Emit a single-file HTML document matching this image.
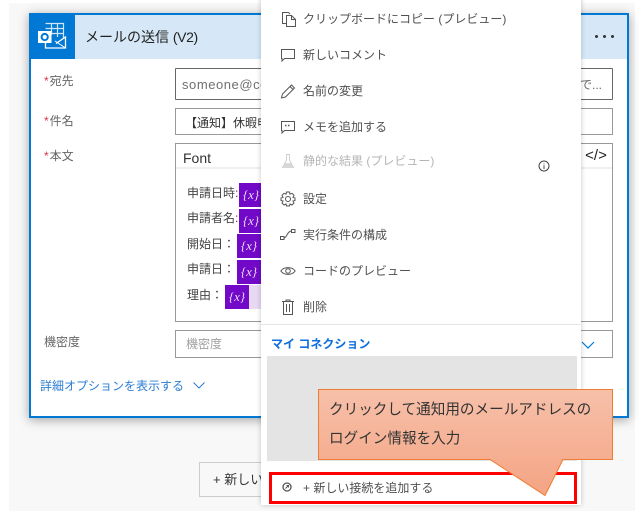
<!DOCTYPE html>
<html lang="ja">
<head>
<meta charset="utf-8">
<style>
html,body{margin:0;padding:0;background:#fff}
body{width:643px;height:521px;position:relative;overflow:hidden;font-family:"Liberation Sans","Noto Sans CJK JP",sans-serif;font-size:12px;color:#333}
.a{position:absolute;white-space:nowrap}
.t{position:absolute;white-space:nowrap;line-height:18px;height:18px}
.box{position:absolute;box-sizing:border-box;background:#fff;border:1px solid #999}
.x{position:absolute;width:24px;height:24px;background:#7209c9;color:#e6d5f5;font:italic 13px/23px "Liberation Serif",serif;text-align:center}
.star{color:#d9304a;margin-right:1px}
svg{position:absolute;overflow:visible;fill:none;stroke:#555;stroke-width:1}
.m{color:#505050}
</style>
</head>
<body>
<div class="a" style="left:9px;top:3px;width:626px;height:508px;background:#f8f8f8"></div>

<!-- card -->
<div class="a" style="left:29px;top:13px;width:600px;height:405px;box-sizing:border-box;background:#fff;border:2px solid #0078d4;box-shadow:0 2px 10px rgba(0,0,0,.35)"></div>
<div class="a" style="left:31px;top:15px;width:596px;height:44px;background:#d6e8f7"></div>
<div class="a" style="left:31px;top:15px;width:44px;height:44px;background:#0078d4"></div>
<svg style="left:38px;top:23px" width="28" height="26" viewBox="0 0 28 26">
<path d="M7.500 .5H25.500V15M13.500 .5V12M19.500 .5V14M7.500 5.500H25.500M7.500 10.500H25.500" stroke="#cfe4f6" stroke-width="1.200"/>
<path d="M7.500 19V25H27.500V14L18 20.500" stroke="#fff" stroke-width="1.300"/>
<path d="M27.500 25L17 18" stroke="#fff"/>
<rect x="0" y="8" width="13.500" height="12" fill="#fff" stroke="none"/>
<circle cx="6.700" cy="14" r="3.100" stroke="#0078d4" stroke-width="2"/>
</svg>
<div class="t" style="left:85px;top:28px;font-size:14px;line-height:18px;color:#222">メールの送信 <span style="letter-spacing:-.4px">(V2)</span></div>
<div class="a" style="left:595px;top:35px;width:3px;height:3px;border-radius:50%;background:#333;box-shadow:8px 0 0 #333,16px 0 0 #333"></div>

<div class="t" style="left:44px;top:72px;color:#666"><span class="star">*</span>宛先</div>
<div class="t" style="left:44px;top:112px;color:#666"><span class="star">*</span>件名</div>
<div class="t" style="left:44px;top:147px;color:#666"><span class="star">*</span>本文</div>
<div class="t" style="left:44px;top:333px;color:#666">機密度</div>

<div class="box" style="left:175px;top:68px;width:438px;height:32px;border-color:#666;border-radius:1px"></div>
<div class="t" style="left:182px;top:76px;font-size:13px;letter-spacing:.55px;color:#707070">someone@co</div>
<div class="t" style="left:580px;top:76px;font-size:12px;color:#666">で...</div>

<div class="box" style="left:175px;top:108px;width:438px;height:27px"></div>
<div class="t" style="left:185px;top:114px;color:#333">【通知】休暇申請</div>

<div class="box" style="left:175px;top:143px;width:438px;height:179px"></div>
<div class="a" style="left:176px;top:167px;width:436px;height:2px;background:#f0f0f0"></div>
<div class="t" style="left:183px;top:149px;font-size:14px;color:#333">Font</div>
<div class="a" style="left:581px;top:146px;width:30px;height:20px;font:15px/20px 'Liberation Sans',sans-serif;color:#222;text-align:center">&lt;/&gt;</div>

<div class="t" style="left:187px;top:184px;color:#444">申請日時:</div>
<div class="x" style="left:239px;top:183px">{x}</div>
<div class="t" style="left:187px;top:209px;color:#444">申請者名:</div>
<div class="x" style="left:239px;top:209px">{x}</div>
<div class="t" style="left:187px;top:235px;color:#444">開始日：</div>
<div class="x" style="left:237px;top:234px">{x}</div>
<div class="t" style="left:187px;top:260px;color:#444">申請日：</div>
<div class="x" style="left:237px;top:260px">{x}</div>
<div class="t" style="left:187px;top:286px;color:#444">理由：</div>
<div class="x" style="left:225px;top:285px">{x}</div>
<div class="a" style="left:249px;top:285px;width:14px;height:24px;background:#e8d9f3"></div>

<div class="box" style="left:175px;top:330px;width:438px;height:28px"></div>
<div class="t" style="left:186px;top:335px;color:#a0a0a0">機密度</div>
<svg style="left:581px;top:341px" width="14" height="9"><path d="M1 1L7 7L13 1" stroke="#0078d4" stroke-width="1.200"/></svg>

<div class="t" style="left:40px;top:377px;color:#2b7cd3">詳細オプションを表示する</div>
<svg style="left:193px;top:382px" width="12" height="8"><path d="M.5 .5L6 6L11.500 .5" stroke="#2b7cd3"/></svg>

<div class="box" style="left:199px;top:462px;width:80px;height:35px;background:#f8f8f8;border-color:#ccc"></div>
<div class="t" style="left:213px;top:471px;font-size:13px;color:#333">+ 新しい</div>

<!-- menu -->
<div class="a" style="left:261px;top:-4px;width:320px;height:509px;background:#fff;box-shadow:0 0 5px rgba(0,0,0,.22)"></div>

<svg style="left:281px;top:11px" width="16" height="17" viewBox="0 0 16 17">
<path d="M5.500 12.500H1.500V1.500H7.500L9 3"/><path d="M5.500 4.500H10.500L14.500 8.500V15.500H5.500Z"/><path d="M10.500 4.500V8.500H14.500"/>
</svg>
<div class="t m" style="left:303px;top:10px">クリップボードにコピー (プレビュー)</div>

<svg style="left:280px;top:48px" width="16" height="15" viewBox="0 0 16 15">
<path d="M1.500 1.500H14.500V10.500H4.500L2 13V10.500H1.500Z"/>
</svg>
<div class="t m" style="left:303px;top:46px">新しいコメント</div>

<svg style="left:280px;top:84px" width="16" height="15" viewBox="0 0 16 15">
<path d="M1.500 14L2.500 10L11.500 1L14.500 4L5.500 13Z"/><path d="M10 2.500L13 5.500"/>
</svg>
<div class="t m" style="left:303px;top:82px">名前の変更</div>

<svg style="left:280px;top:120px" width="16" height="15" viewBox="0 0 16 15">
<path d="M1.500 1.500H14.500V10.500H4.500L2 13V10.500H1.500Z"/><path d="M5 5.500H6.500M8 5.500H9.500" stroke-width="1.500"/>
</svg>
<div class="t m" style="left:303px;top:118px">メモを追加する</div>

<svg style="left:281px;top:153px" width="14" height="16" viewBox="0 0 14 16">
<path d="M5 1.500H9M5.500 1.500V7L1.500 14.500H12.500L8.500 7V1.500" stroke="#d0d0d0"/><path d="M4 10H10L12.500 15H1.500Z" fill="#d8d8d8" stroke="none"/>
</svg>
<div class="t" style="left:303px;top:152px;color:#b5b5b5">静的な結果 (プレビュー)</div>
<svg style="left:538px;top:160px" width="12" height="12" viewBox="0 0 12 12">
<circle cx="6" cy="6" r="5" stroke="#444"/><path d="M6 3.500V4.500M6 5.500V9" stroke="#444"/>
</svg>

<svg style="left:280px;top:191px" width="16" height="16" viewBox="0 0 16 16">
<path d="M6.500 1H9.500L10 3.200L12 2.300L14 4.300L13 6.300L15 7V9.500L13 10L14 12L12 14L10 13L9.500 15H6.500L6 13L4 14L2 12L3 10L1 9.500V7L3 6.300L2 4.300L4 2.300L6 3.200Z"/><circle cx="8" cy="8" r="2.500"/>
</svg>
<div class="t m" style="left:303px;top:190px">設定</div>

<svg style="left:280px;top:229px" width="16" height="12" viewBox="0 0 16 12">
<rect x=".5" y="7.500" width="3.500" height="3"/><rect x="11.500" y=".5" width="3.500" height="3"/><path d="M4 9C7 9 7 2 11.500 2"/>
</svg>
<div class="t m" style="left:303px;top:226px">実行条件の構成</div>

<svg style="left:280px;top:266px" width="16" height="10" viewBox="0 0 16 10">
<path d="M.8 5C4 .5 12 .5 15.200 5C12 9.500 4 9.500 .8 5Z"/><circle cx="8" cy="5" r="2.300"/>
</svg>
<div class="t m" style="left:303px;top:262px">コードのプレビュー</div>

<svg style="left:281px;top:299px" width="14" height="16" viewBox="0 0 14 16">
<path d="M1 2.500H13M5 2.500V1H9V2.500M2.500 2.500V15.500H11.500V2.500M5.500 5V13M8.500 5V13"/>
</svg>
<div class="t m" style="left:303px;top:298px">削除</div>

<div class="a" style="left:261px;top:324px;width:320px;height:1px;background:#e5e5e5"></div>
<div class="t" style="left:271px;top:335px;font-weight:bold;color:#0f6fe0">マイ コネクション</div>
<div class="a" style="left:267px;top:356px;width:310px;height:105px;background:#e4e4e4"></div>

<div class="a" style="left:269px;top:472px;width:308px;height:32px;box-sizing:border-box;border:3px solid #f00"></div>
<svg style="left:282px;top:482px" width="10" height="10" viewBox="0 0 10 10">
<circle cx="5" cy="5" r="4" stroke="#555" stroke-width="1.300"/><path d="M3.500 6.500L6.500 3.500M4.500 3.500H6.500V5.500" stroke="#555"/>
</svg>
<div class="t m" style="left:303px;top:479px">+ 新しい接続を追加する</div>

<!-- callout -->
<svg style="left:318px;top:389px" width="295" height="108" viewBox="0 0 295 108">
<defs><linearGradient id="g" x1="0" y1="0" x2="0" y2="1"><stop offset="0" stop-color="#f7c0aa"/><stop offset="1" stop-color="#f4a483"/></linearGradient></defs>
<path d="M.5 .5H294.500V70.500H245L227 106.500L172 70.500H.5Z" fill="url(#g)" stroke="#ed7d31" stroke-width="1"/>
</svg>
<div class="t" style="left:329px;top:400px;font-size:14.600px;line-height:20px;height:20px;color:#333">クリックして通知用のメールアドレスの</div>
<div class="t" style="left:329px;top:429px;font-size:14.600px;line-height:20px;height:20px;color:#333">ログイン情報を入力</div>
</body>
</html>
